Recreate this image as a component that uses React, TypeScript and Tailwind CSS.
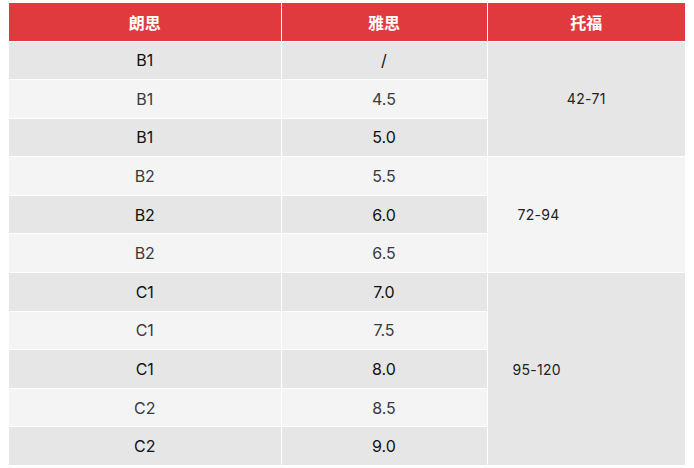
import React from 'react'

type Row = { ielts: string; score: string; dark: boolean }

const rows: Row[] = [
    { ielts: 'B1', score: '/', dark: true },
    { ielts: 'B1', score: '4.5', dark: false },
    { ielts: 'B1', score: '5.0', dark: true },
    { ielts: 'B2', score: '5.5', dark: false },
    { ielts: 'B2', score: '6.0', dark: true },
    { ielts: 'B2', score: '6.5', dark: false },
    { ielts: 'C1', score: '7.0', dark: true },
    { ielts: 'C1', score: '7.5', dark: false },
    { ielts: 'C1', score: '8.0', dark: true },
    { ielts: 'C2', score: '8.5', dark: false },
    { ielts: 'C2', score: '9.0', dark: true },
]

// toefl cells span several rows
const toefl: Record<number, { text: string; span: number; cls: string }> = {
    0: { text: '42-71', span: 3, cls: 'bg-[#e6e6e6] text-center' },
    3: { text: '72-94', span: 3, cls: 'bg-[#f4f4f4] text-left pl-[30px]' },
    6: { text: '95-120', span: 5, cls: 'bg-[#e6e6e6] text-left pl-[25px]' },
}

const App = () => {
    return (
        <div className="w-[694px] h-[468px] bg-white pt-[3px] pl-[9px] font-['Inter','Noto_Sans_CJK_SC',sans-serif]">
            <table className="w-[676px] border-collapse table-fixed">
                <colgroup>
                    <col className="w-[272px]" />
                    <col className="w-[206px]" />
                    <col className="w-[198px]" />
                </colgroup>
                <thead>
                    <tr className="h-[38px] bg-[#e03a3e] text-white text-[16px] font-bold">
                        <th className="border-r border-white font-['Noto_Sans_CJK_SC',sans-serif]">朗思</th>
                        <th className="border-r border-white font-['Noto_Sans_CJK_SC',sans-serif]">雅思</th>
                        <th className="font-['Noto_Sans_CJK_SC',sans-serif]">托福</th>
                    </tr>
                </thead>
                <tbody>
                    {rows.map((r, i) => (
                        <tr key={i} className="h-[38.6px]">
                            <td
                                className={
                                    'border border-white border-l-0 text-center text-[16px] ' +
                                    (r.dark ? 'bg-[#e6e6e6] text-[#111111]' : 'bg-[#f4f4f4] text-[#3a3a3a]')
                                }
                            >
                                {r.ielts}
                            </td>
                            <td
                                className={
                                    'border border-white text-center text-[16px] ' +
                                    (r.dark ? 'bg-[#e6e6e6] text-[#111111]' : 'bg-[#f4f4f4] text-[#3a3a3a]')
                                }
                            >
                                {r.score}
                            </td>
                            {toefl[i] && (
                                <td
                                    rowSpan={toefl[i].span}
                                    className={'border border-white border-r-0 text-[14px] text-[#222222] tracking-[0.3px] ' + toefl[i].cls}
                                >
                                    {toefl[i].text}
                                </td>
                            )}
                        </tr>
                    ))}
                </tbody>
            </table>
        </div>
    )
}

export default App
